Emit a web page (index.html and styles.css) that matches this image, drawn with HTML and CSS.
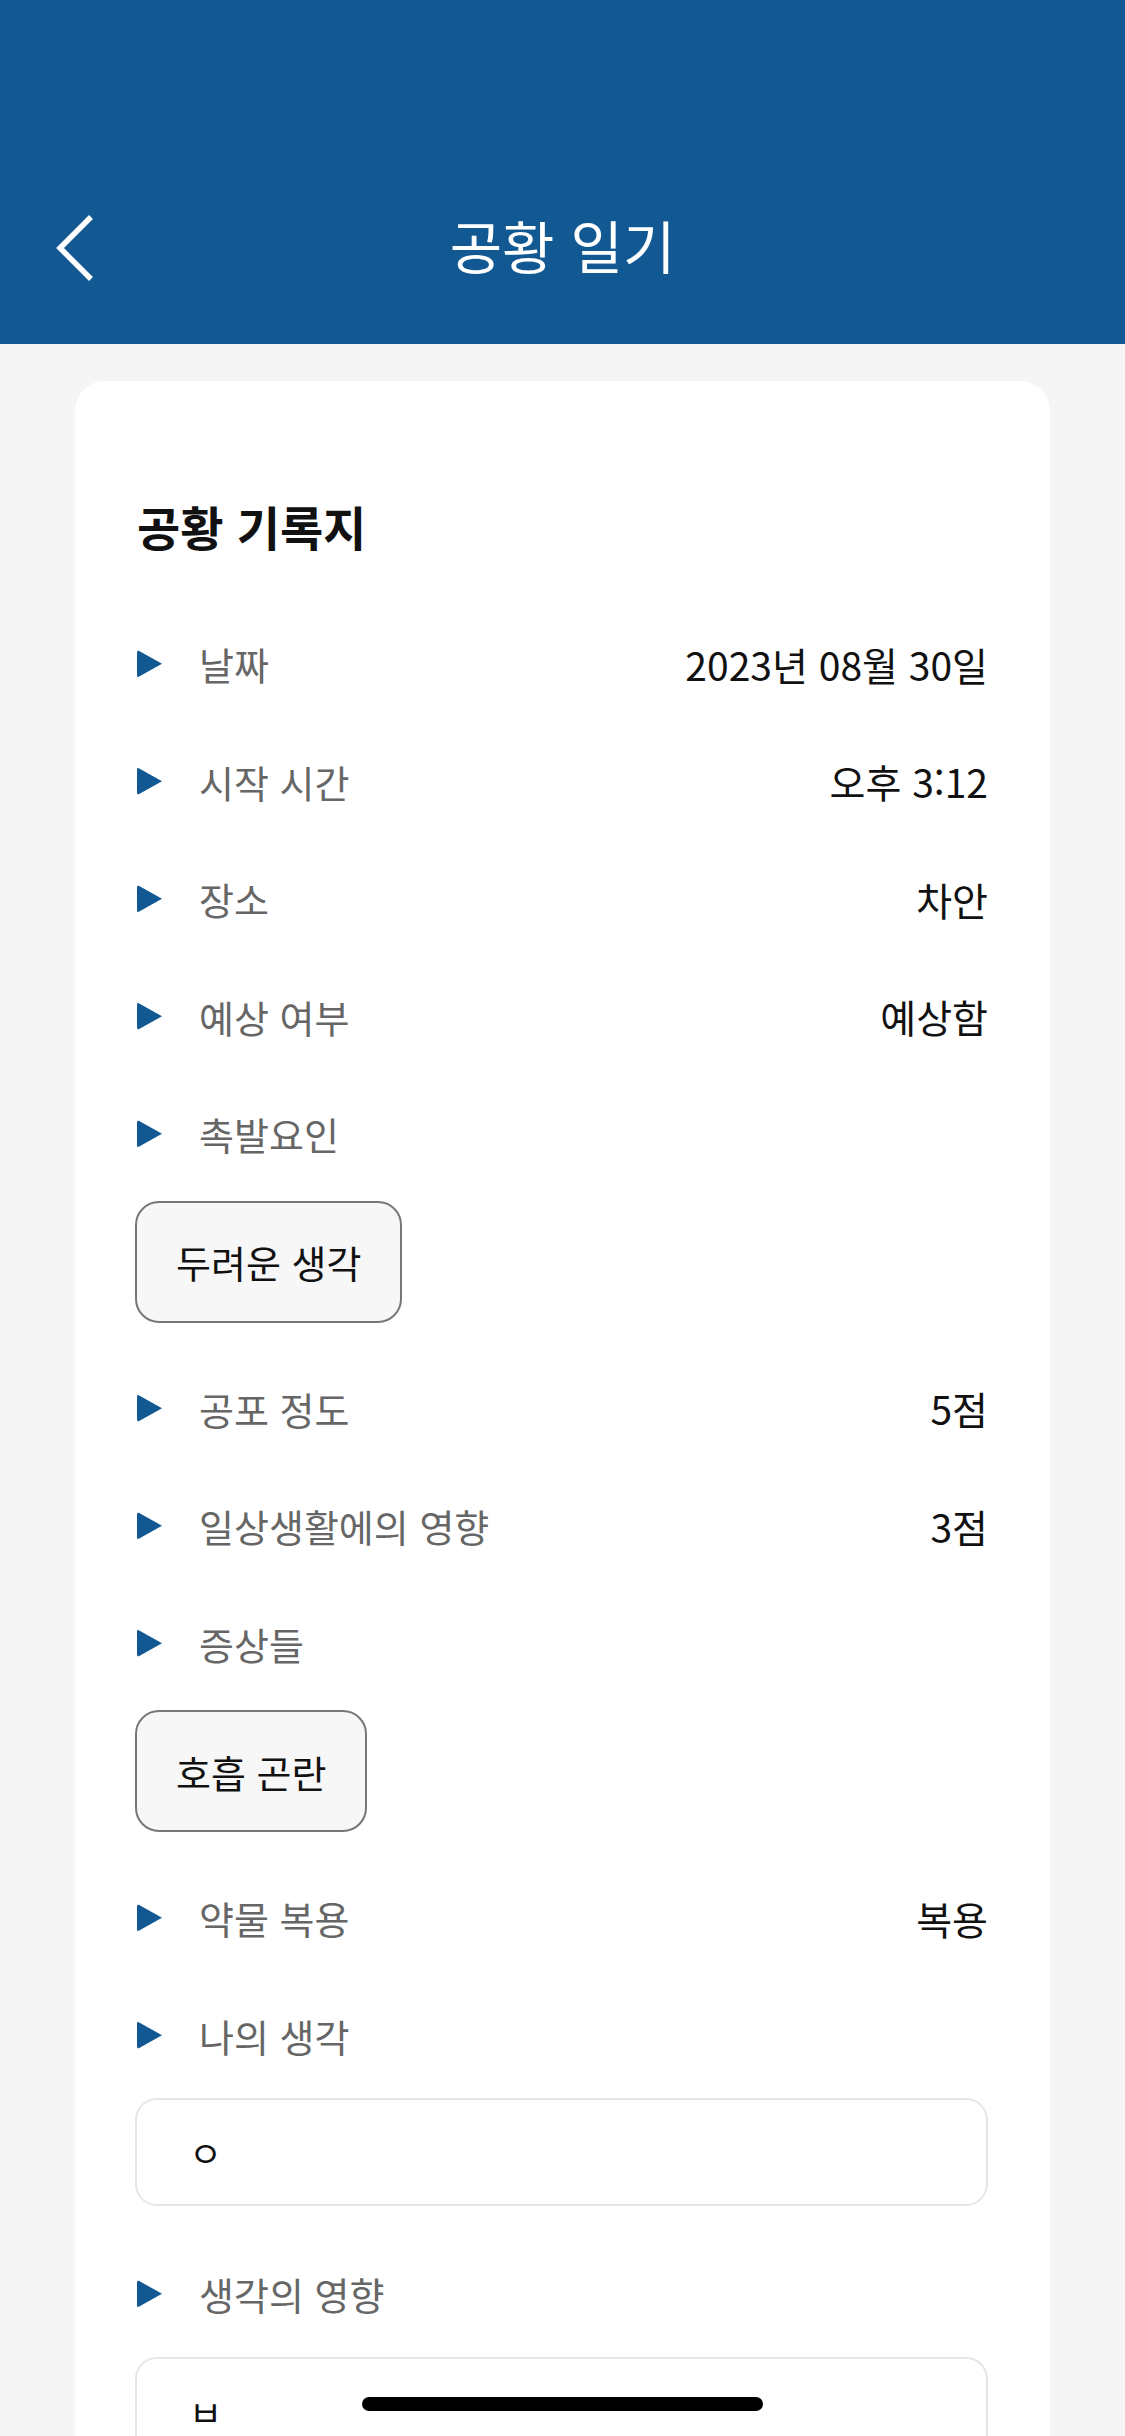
FILE: index.html
```html
<!DOCTYPE html>
<html lang="ko">
<head>
<meta charset="utf-8">
<title>공황 일기</title>
<link rel="stylesheet" href="styles.css">
</head>
<body>
<div class="screen">
  <header class="appbar">
    <div class="bar">
      <div class="back">
        <svg width="40" height="66" viewBox="0 0 40 66"><polyline points="36,2 5,33 36,64" fill="none" stroke="#fff" stroke-width="5.5" stroke-linecap="butt" stroke-linejoin="miter"/></svg>
      </div>
      <h1 class="title">공황 일기</h1>
      <div></div>
    </div>
  </header>

  <main class="card">
    <h2 class="card-title">공황 기록지</h2>

    <div class="row"><span class="tri"></span><span class="label">날짜</span><span class="value">2023년 08월 30일</span></div>
    <div class="row"><span class="tri"></span><span class="label">시작 시간</span><span class="value">오후 3:12</span></div>
    <div class="row"><span class="tri"></span><span class="label">장소</span><span class="value">차안</span></div>
    <div class="row"><span class="tri"></span><span class="label">예상 여부</span><span class="value">예상함</span></div>
    <div class="row"><span class="tri"></span><span class="label">촉발요인</span></div>
    <div class="chips"><span class="chip">두려운 생각</span></div>
    <div class="row"><span class="tri"></span><span class="label">공포 정도</span><span class="value">5점</span></div>
    <div class="row"><span class="tri"></span><span class="label">일상생활에의 영향</span><span class="value">3점</span></div>
    <div class="row"><span class="tri"></span><span class="label">증상들</span></div>
    <div class="chips"><span class="chip">호흡 곤란</span></div>
    <div class="row"><span class="tri"></span><span class="label">약물 복용</span><span class="value">복용</span></div>
    <div class="row"><span class="tri"></span><span class="label">나의 생각</span></div>
    <div class="textbox">ㅇ</div>
    <div class="row"><span class="tri"></span><span class="label">생각의 영향</span></div>
    <div class="textbox">ㅂ</div>
  </main>

  <div class="home-indicator"></div>
</div>
</body>
</html>
```

FILE: styles.css
```css
* { box-sizing: border-box; }
html, body {
  margin: 0;
  padding: 0;
}
body {
  background: #f5f5f5;
  font-family: "Noto Sans CJK KR", "Noto Sans", sans-serif;
  color: #111;
}
.screen {
  width: 1125px;
  height: 2436px;
  overflow: hidden;
  position: relative;
  background: #f5f5f5;
}
.appbar {
  height: 344px;
  background: #125892;
  padding-top: 192px;
}
.bar {
  height: 104px;
  display: grid;
  grid-template-columns: 1fr auto 1fr;
  align-items: center;
}
.back {
  padding-left: 55px;
  padding-top: 8px;
  display: flex;
  align-items: center;
}
.back svg { display: block; }
.title {
  margin: 0;
  color: #fff;
  font-size: 57px;
  font-weight: 400;
  line-height: 104px;
  letter-spacing: 0;
}
.card {
  margin: 37px 75px 0;
  background: #fff;
  border-radius: 30px 30px 0 0;
  padding: 114px 62px 0;
  min-height: 2100px;
}
.card-title {
  margin: 0 0 48px;
  font-size: 47px;
  font-weight: 700;
  line-height: 62px;
  color: #111;
}
.row {
  height: 117.5px;
  display: flex;
  align-items: center;
}
.tri {
  width: 25px;
  height: 28px;
  flex: none;
  background: #125892;
  clip-path: polygon(0 0, 100% 50%, 0 100%);
  border-radius: 3px;
}
.label {
  margin-left: 37px;
  font-size: 38px;
  color: #666;
  font-weight: 400;
  flex: 1;
}
.value {
  font-size: 39px;
  color: #111;
  font-weight: 400;
}
.chips {
  display: flex;
  margin: 8px 0 27px -2px;
}
.chip {
  height: 122px;
  display: inline-flex;
  align-items: center;
  padding: 0 39px;
  border: 2.5px solid #77777b;
  border-radius: 24px;
  background: #f7f7f8;
  font-size: 38px;
  color: #111;
}
.textbox {
  margin: 4px 0 29px -2px;
  height: 108px;
  border: 2.5px solid #e6e6e6;
  border-radius: 22px;
  padding: 0 52px;
  display: flex;
  align-items: center;
  font-size: 36px;
  color: #111;
  background: #fff;
}
.home-indicator {
  position: absolute;
  left: 362px;
  width: 401px;
  bottom: 25px;
  height: 14px;
  border-radius: 7px;
  background: #000;
}
```
